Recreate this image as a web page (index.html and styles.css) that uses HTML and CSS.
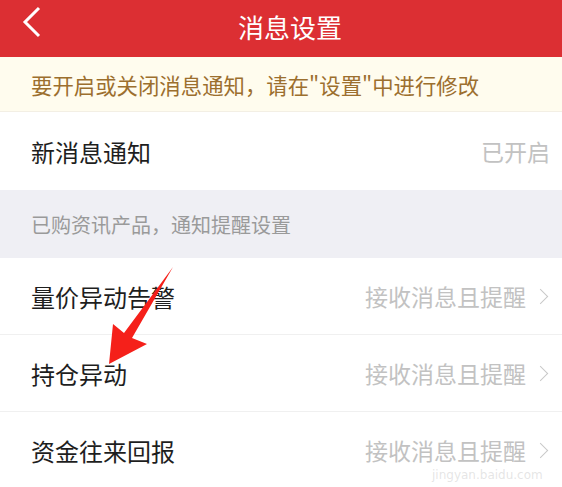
FILE: index.html
```html
<!DOCTYPE html>
<html lang="zh-CN">
<head>
  <meta charset="UTF-8">
  <meta name="viewport" content="width=device-width, initial-scale=1.0">
  <title>消息设置</title>
  <link rel="stylesheet" href="styles.css">
</head>
<body>
  <div class="page">
    <header class="top-bar">
      <span class="back-btn">
        <svg width="22" height="32" viewBox="0 0 22 32"><polyline points="18,2 4,16 18,30" fill="none" stroke="#fff" stroke-width="3"/></svg>
      </span>
      <h1>消息设置</h1>
    </header>

    <div class="notice">要开启或关闭消息通知，请在"设置"中进行修改</div>

    <div class="row row-first">
      <span class="row-label">新消息通知</span>
      <span class="row-value">已开启</span>
    </div>

    <div class="section-title">已购资讯产品，通知提醒设置</div>

    <div class="row">
      <span class="row-label">量价异动告警</span>
      <span class="row-value">接收消息且提醒<i class="chevron"></i></span>
    </div>
    <div class="row">
      <span class="row-label">持仓异动</span>
      <span class="row-value">接收消息且提醒<i class="chevron"></i></span>
    </div>
    <div class="row">
      <span class="row-label">资金往来回报</span>
      <span class="row-value">接收消息且提醒<i class="chevron"></i></span>
    </div>

    <!-- annotation arrow drawn over the list -->
    <svg class="mark-arrow" width="562" height="487" viewBox="0 0 562 487">
      <polygon points="173,267 132,338 147,344 109,364 113,324 124,333" fill="#f5201a"/>
    </svg>
    <div class="watermark">jingyan.baidu.com</div>
  </div>
</body>
</html>
```

FILE: styles.css
```css
body {
  margin: 0;
  font-family: "Noto Sans CJK SC", "Noto Sans", sans-serif;
  background: #fff;
}
.page {
  position: relative;
  width: 562px;
  height: 487px;
  overflow: hidden;
}
.top-bar {
  height: 57px;
  background: #dc2f33;
  display: flex;
  align-items: center;
  justify-content: center;
  position: relative;
}
.top-bar h1 {
  margin: 0 0 4px 18px;
  font-size: 26px;
  font-weight: 400;
  color: #fff;
}
.back-btn {
  position: absolute;
  left: 21px;
  top: 6px;
}
.notice {
  height: 55px;
  background: #fffcee;
  color: #9c6f2e;
  font-size: 21.4px;
  display: flex;
  align-items: center;
  padding-left: 31px;
  border-bottom: 1px solid #f3efe4;
  box-sizing: border-box;
}
.row {
  height: 77px;
  display: flex;
  align-items: center;
  justify-content: space-between;
  padding: 0 12px 0 31px;
  border-bottom: 1px solid #f0f0f0;
  box-sizing: border-box;
}
.row-first {
  height: 78px;
  border-bottom: none;
}
.row-label {
  font-size: 24px;
  color: #1e1e1e;
}
.row-value {
  font-size: 23px;
  color: #c2c2c2;
  display: flex;
  align-items: center;
}
.chevron {
  display: inline-block;
  width: 10px;
  height: 10px;
  border-top: 1.5px solid #c8c8c8;
  border-right: 1.5px solid #c8c8c8;
  transform: rotate(45deg);
  margin: 0 4px 0 9px;
}
.section-title {
  height: 68px;
  background: #efeff4;
  color: #9a9a9a;
  font-size: 20px;
  display: flex;
  align-items: center;
  padding-left: 31px;
}
.mark-arrow {
  position: absolute;
  left: 0;
  top: 0;
}
.watermark {
  position: absolute;
  left: 432px;
  top: 468px;
  font-family: "DejaVu Sans", sans-serif;
  font-size: 12px;
  color: rgba(180, 180, 180, 0.35);
}
```
